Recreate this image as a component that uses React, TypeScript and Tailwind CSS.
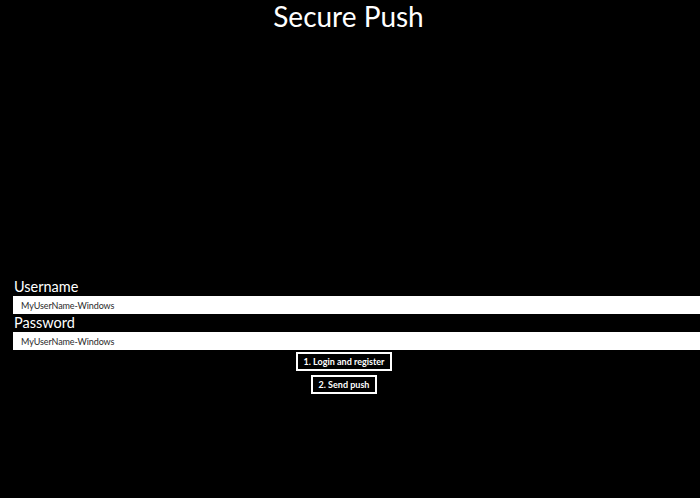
export default function App() {
  return (
    <div
      className="w-[700px] h-[498px] bg-black text-white overflow-hidden"
      style={{ fontFamily: 'Lato, "Open Sans", sans-serif' }}
    >
      <h1 className="h-[36px] pr-[3px] text-center text-[28px] leading-[32px] font-normal">Secure Push</h1>
      <div className="mt-[242px] pl-[13px] flex flex-col">
        <label className="h-[18px] pl-[1px] text-[14.5px] leading-[18px]">Username</label>
        <input
          readOnly
          value="MyUserName-Windows"
          className="w-[687px] h-[18px] bg-white text-[#2a2a2a] text-[9px] tracking-[-0.1px] px-[8px] outline-none"
        />
        <label className="h-[18px] pl-[1px] text-[14.5px] leading-[18px]">Password</label>
        <input
          readOnly
          value="MyUserName-Windows"
          className="w-[687px] h-[18px] bg-white text-[#2a2a2a] text-[9px] tracking-[-0.1px] px-[8px] outline-none"
        />
        <div className="mt-[2px] flex flex-col items-center gap-[4px] pr-[25px]">
          <button className="h-[19px] px-[6px] border-2 border-white text-[9px] font-bold leading-none">
            1. Login and register
          </button>
          <button className="h-[19px] px-[6px] border-2 border-white text-[9px] font-bold leading-none">
            2. Send push
          </button>
        </div>
      </div>
    </div>
  );
}
